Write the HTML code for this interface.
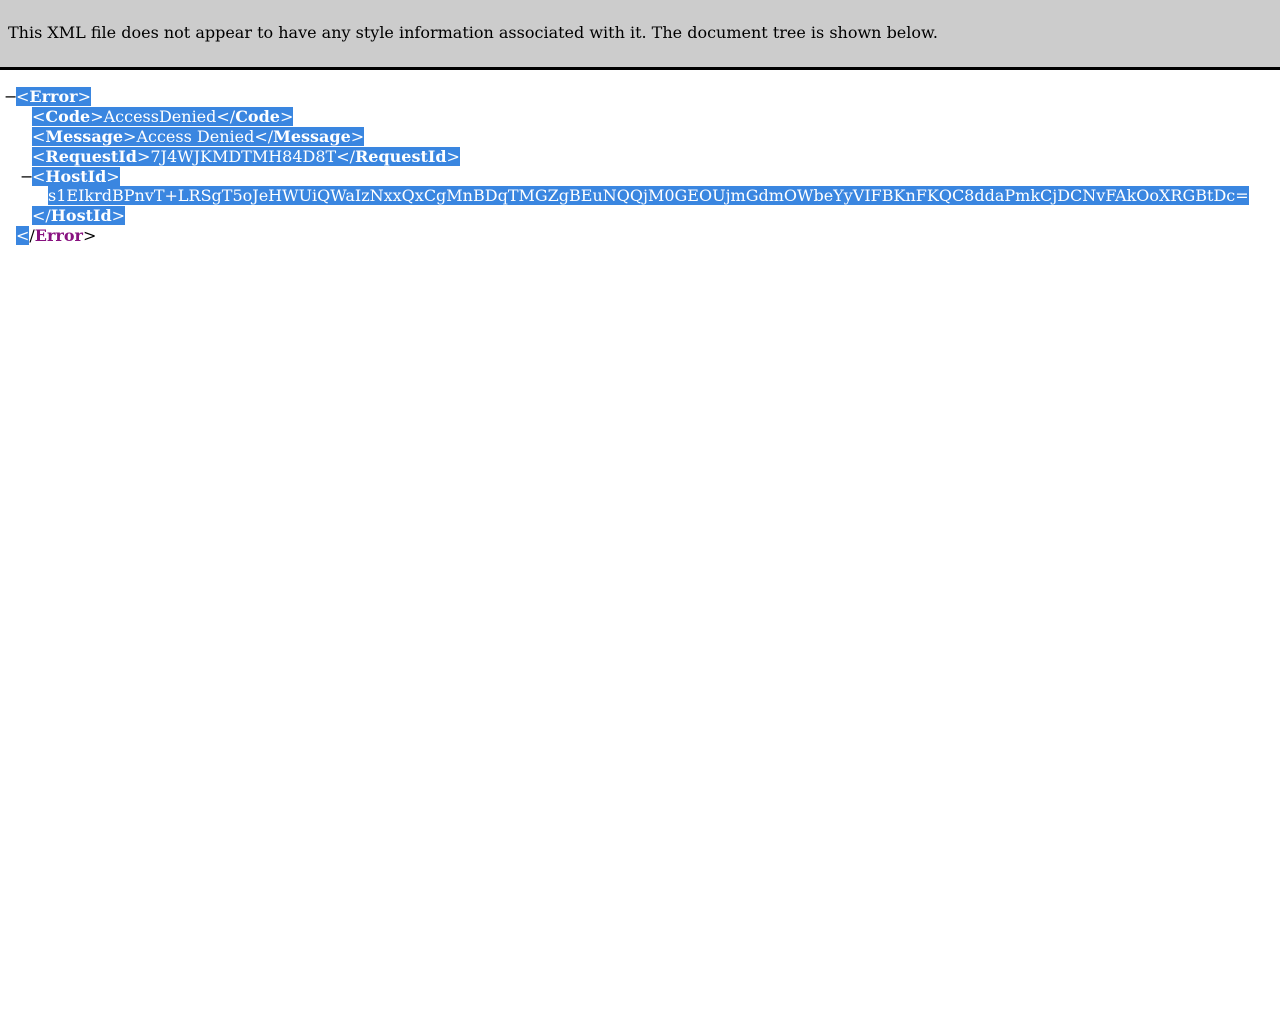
<!DOCTYPE html>
<html><head><meta charset="utf-8"><style>
body{margin:0;background:#fff;font-family:"DejaVu Serif",serif;font-size:16px;}
.hdr{height:67px;background:#cccccc;border-bottom:3px solid #000;box-sizing:content-box;}
.hdr div{position:absolute;left:8px;top:23px;font-size:16px;color:#000;}
.l{position:absolute;white-space:pre;line-height:20px;height:20px;color:#fff;}
.s{background:#3a86e0;}
b{font-weight:bold;}
.m{position:absolute;color:#000;line-height:20px;}
</style></head><body>
<div class="hdr"><div>This XML file does not appear to have any style information associated with it. The document tree is shown below.</div></div>
<div class="m" style="left:4px;top:87px">−</div>
<div class="l" style="left:16px;top:87px"><span class="s">&lt;<b>Error</b>&gt;</span></div>
<div class="l" style="left:32px;top:107px"><span class="s">&lt;<b>Code</b>&gt;AccessDenied&lt;/<b>Code</b>&gt;</span></div>
<div class="l" style="left:32px;top:127px"><span class="s">&lt;<b>Message</b>&gt;Access Denied&lt;/<b>Message</b>&gt;</span></div>
<div class="l" style="left:32px;top:147px"><span class="s">&lt;<b>RequestId</b>&gt;7J4WJKMDTMH84D8T&lt;/<b>RequestId</b>&gt;</span></div>
<div class="m" style="left:20px;top:167px">−</div>
<div class="l" style="left:32px;top:167px"><span class="s">&lt;<b>HostId</b>&gt;</span></div>
<div class="l" style="left:48px;top:186px"><span class="s">s1EIkrdBPnvT+LRSgT5oJeHWUiQWaIzNxxQxCgMnBDqTMGZgBEuNQQjM0GEOUjmGdmOWbeYyVIFBKnFKQC8ddaPmkCjDCNvFAkOoXRGBtDc=</span></div>
<div class="l" style="left:32px;top:206px"><span class="s">&lt;/<b>HostId</b>&gt;</span></div>
<div class="l" style="left:16px;top:226px;color:#000"><span class="s" style="color:#fff">&lt;</span>/<b style="color:#881280">Error</b>&gt;</div>
</body></html>
